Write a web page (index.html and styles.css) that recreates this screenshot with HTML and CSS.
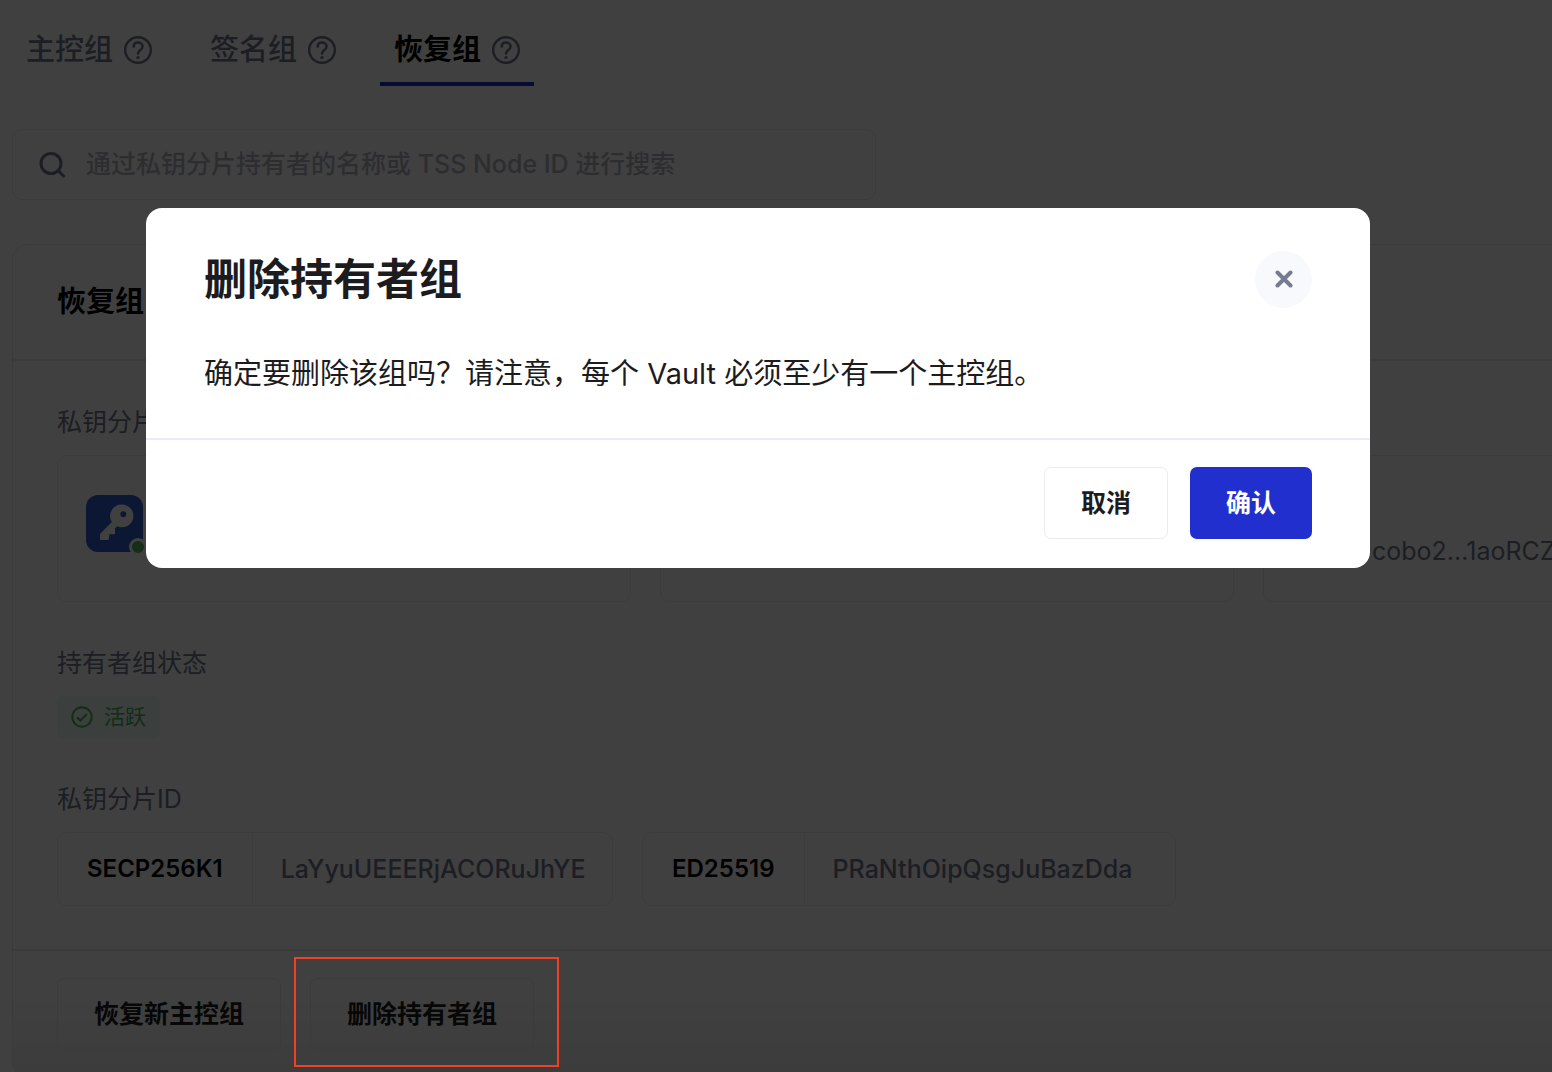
FILE: index.html
```html
<!DOCTYPE html>
<html lang="zh-CN">
<head>
<meta charset="utf-8">
<meta name="viewport" content="width=device-width, initial-scale=1">
<title>恢复组</title>
<link rel="stylesheet" href="styles.css">
</head>
<body>
<svg class="sprite" aria-hidden="true">
  <symbol id="help" viewBox="0 0 28 28">
    <circle cx="14" cy="14" r="12.8" fill="none" stroke="currentColor" stroke-width="2.4"/>
    <path d="M9.6 10.6C9.900 8.200 11.600 6.600 14 6.600c2.600 0 4.600 1.600 4.600 3.900 0 1.800-1.100 2.800-2.500 3.800-1.400 1-2.100 1.800-2.100 3.300" fill="none" stroke="currentColor" stroke-width="2.500" stroke-linecap="round"/>
    <circle cx="14" cy="21.500" r="1.600" fill="currentColor"/>
  </symbol>
</svg>
<main class="page">
  <nav class="tabs">
    <a class="tab" href="#main-group">主控组<svg class="help"><use href="#help"/></svg></a>
    <a class="tab" href="#signing-group">签名组<svg class="help"><use href="#help"/></svg></a>
    <a class="tab tab-active" href="#recovery-group" aria-current="page">恢复组<svg class="help"><use href="#help"/></svg></a>
  </nav>

  <label class="search">
    <svg class="search-icon" viewBox="0 0 28 28" aria-hidden="true"><circle cx="13" cy="12.500" r="10" /><path d="M20.300 19.800L25.500 25"/></svg>
    <input class="search-input" type="search" placeholder="通过私钥分片持有者的名称或 TSS Node ID 进行搜索">
  </label>

  <section class="panel" id="recovery-group">
    <header class="panel-head"><h2 class="panel-title">恢复组</h2></header>
    <div class="panel-body">
      <div class="field">
        <h3 class="field-label">私钥分片</h3>
        <div class="holders">
          <article class="holder">
            <span class="holder-icon">
              <svg class="key" viewBox="0 0 57 57" aria-hidden="true">
                <path fill="#fff" fill-rule="evenodd" d="M36 9.500a11.400 11.400 0 1 1-4.900 21.700L29 33.500V38.500a.8.8 0 0 1-.8.8H23.300L22.800 44a1 1 0 0 1-1 1H14.800a.8.8 0 0 1-.8-.8V39.800a2 2 0 0 1 .7-1.500L25.900 27A11.400 11.400 0 0 1 36 9.500zM37.300 16.200a3 3 0 1 0 0 6 3 3 0 0 0 0-6z"/>
              </svg>
              <span class="online"></span>
            </span>
          </article>
          <article class="holder"></article>
          <article class="holder"><p class="node-id">cobo2...1aoRCZ</p></article>
        </div>
      </div>
      <div class="field">
        <h3 class="field-label">持有者组状态</h3>
        <span class="badge">
          <svg class="check" viewBox="0 0 22 22" aria-hidden="true"><circle cx="11" cy="11" r="9.700"/><path d="M6 11.200l3.400 3.300 6.600-6.500"/></svg>活跃</span>
      </div>
      <div class="field">
        <h3 class="field-label">私钥分片ID</h3>
        <dl class="ids">
          <div class="id-box"><dt class="id-name">SECP256K1</dt><dd class="id-value">LaYyuUEEERjACORuJhYE</dd></div>
          <div class="id-box"><dt class="id-name">ED25519</dt><dd class="id-value">PRaNthOipQsgJuBazDda</dd></div>
        </dl>
      </div>
    </div>
    <footer class="panel-foot">
      <button class="btn" type="button">恢复新主控组</button>
      <div class="marked">
        <button class="btn" type="button">删除持有者组</button>
        <span class="marker"></span>
      </div>
    </footer>
  </section>
</main>

<div class="overlay">
  <section class="dialog" role="dialog" aria-modal="true" aria-labelledby="dialog-title">
    <div class="dialog-body">
      <header class="dialog-head">
        <h1 class="dialog-title" id="dialog-title">删除持有者组</h1>
        <button class="close" type="button" aria-label="关闭"><svg class="close-icon" viewBox="0 0 18 18" aria-hidden="true"><path d="M2.500 2.500l13 13M15.500 2.500l-13 13"/></svg></button>
      </header>
      <p class="dialog-text">确定要删除该组吗？请注意，每个 Vault 必须至少有一个主控组。</p>
    </div>
    <footer class="dialog-foot">
      <button class="btn" type="button">取消</button>
      <button class="btn btn-primary" type="button">确认</button>
    </footer>
  </section>
</div>
</body>
</html>
```
FILE: styles.css
```css
* { box-sizing: border-box; }

:root {
  --ink: #1c1c1e;
  --muted: #73778c;
  --line: #ebebf3;
  --blue: #222fcf;
}

body {
  margin: 0;
  height: 100vh;
  overflow: hidden;
  background: #fff;
  color: var(--ink);
  font: 25px/36px Inter, "Noto Sans CJK SC", sans-serif;
}

h1, h2, h3, p, dl, dd { margin: 0; }
button, input { font: inherit; color: inherit; }
.sprite { display: none; }

.page { padding-left: 12px; }

.tabs { display: flex; gap: 30px; height: 86px; }

.tab {
  display: flex;
  align-items: center;
  gap: 11px;
  padding: 28px 14px 10px;
  border-bottom: 4px solid transparent;
  color: var(--muted);
  font-size: 29px;
  font-weight: 500;
  text-decoration: none;
}

.tab-active { border-color: var(--blue); color: #000; font-weight: 700; }
.help { width: 28px; height: 28px; color: var(--muted); }

.search {
  display: flex;
  align-items: center;
  gap: 20px;
  width: 864px;
  max-width: 100%;
  height: 71px;
  margin-top: 43px;
  padding: 0 25px;
  border: 1px solid var(--line);
  border-radius: 10px;
}

.search-icon {
  flex: none;
  width: 28px;
  height: 28px;
  fill: none;
  stroke: var(--muted);
  stroke-width: 3;
  stroke-linecap: round;
}

.search-input {
  flex: 1;
  padding: 0 0 2px;
  border: 0;
  outline: 0;
  background: none;
  font-weight: 500;
}

.search-input::placeholder { color: #b4b5c0; opacity: 1; }

.panel {
  margin-top: 44px;
  overflow: hidden;
  border: 1px solid var(--line);
  border-right: 0;
  border-radius: 16px 0 0 16px;
}

.panel-head { padding: 39px 44px; border-bottom: 2px solid var(--line); }
.panel-title { color: #000; font-size: 29px; line-height: 36px; font-weight: 700; }

.panel-body {
  display: flex;
  flex-direction: column;
  gap: 43px;
  padding: 43px 44px;
}

.field { display: flex; flex-direction: column; align-items: flex-start; gap: 15px; }
.field-label { color: var(--muted); font-size: 25px; line-height: 36px; font-weight: 400; }

.holders { display: grid; grid-template-columns: repeat(3, 574px); gap: 29px; }

.holder {
  height: 147px;
  padding: 39px 28px;
  border: 1px solid var(--line);
  border-radius: 10px;
}

.holder-icon {
  position: relative;
  display: block;
  width: 57px;
  height: 57px;
  border-radius: 12px;
  background: #2d5bcc;
}

.key { display: block; width: 57px; height: 57px; }

.online {
  position: absolute;
  right: -4px;
  bottom: -4px;
  width: 18px;
  height: 18px;
  border: 3px solid #fff;
  border-radius: 50%;
  background: #58b55a;
}

.node-id { padding: 38px 0 0 80px; color: var(--muted); }

.badge {
  display: flex;
  align-items: center;
  gap: 11px;
  height: 42px;
  padding: 0 14px;
  border-radius: 6px;
  background: #e9faf5;
  color: #4fb254;
  font-size: 21px;
}

.check {
  width: 22px;
  height: 22px;
  fill: none;
  stroke: currentColor;
  stroke-width: 2;
}

.ids { display: grid; grid-template-columns: 556px 534px; gap: 29px; }
.id-box { display: flex; border: 1px solid var(--line); border-radius: 10px; }
.id-name { padding: 18px 29px; border-right: 1px solid var(--line); color: #000; font-size: 24px; font-weight: 600; }
.id-value { flex: 1; padding: 18px 0 18px 28px; color: var(--muted); font-weight: 500; }

.panel-foot {
  display: flex;
  gap: 29px;
  padding: 27px 44px;
  border-top: 2px solid var(--line);
  background: linear-gradient(#fff 30%, #eee);
}

.marked { position: relative; }

.marker {
  position: absolute;
  z-index: 2;
  inset: -21px -25px -17px -16px;
  border: 2px solid #f04124;
  pointer-events: none;
}

.btn {
  height: 72px;
  padding: 0 36px;
  border: 1px solid var(--line);
  border-radius: 7px;
  background: none;
  font-weight: 700;
}

.btn-primary { border: 0; background: var(--blue); color: #fff; }

.overlay {
  position: fixed;
  z-index: 1;
  inset: 0;
  padding: 208px 182px 0 146px;
  background: rgba(0, 0, 0, 0.75);
}

.dialog { border-radius: 16px; background: #fff; }
.dialog-body { padding: 42px 58px 46px; }

.dialog-head { display: flex; align-items: center; justify-content: space-between; }
.dialog-title { font-size: 43px; line-height: 58px; font-weight: 700; }

.close {
  display: grid;
  place-items: center;
  width: 57px;
  height: 57px;
  padding: 0;
  border: 0;
  border-radius: 50%;
  background: #f8f9fd;
}

.close-icon {
  width: 18px;
  height: 18px;
  fill: none;
  stroke: #777b90;
  stroke-width: 4;
  stroke-linecap: round;
}

.dialog-text { margin-top: 48px; font-size: 29px; line-height: 36px; }

.dialog-foot {
  display: flex;
  justify-content: flex-end;
  gap: 22px;
  padding: 27px 58px 29px;
  border-top: 2px solid var(--line);
}
```
